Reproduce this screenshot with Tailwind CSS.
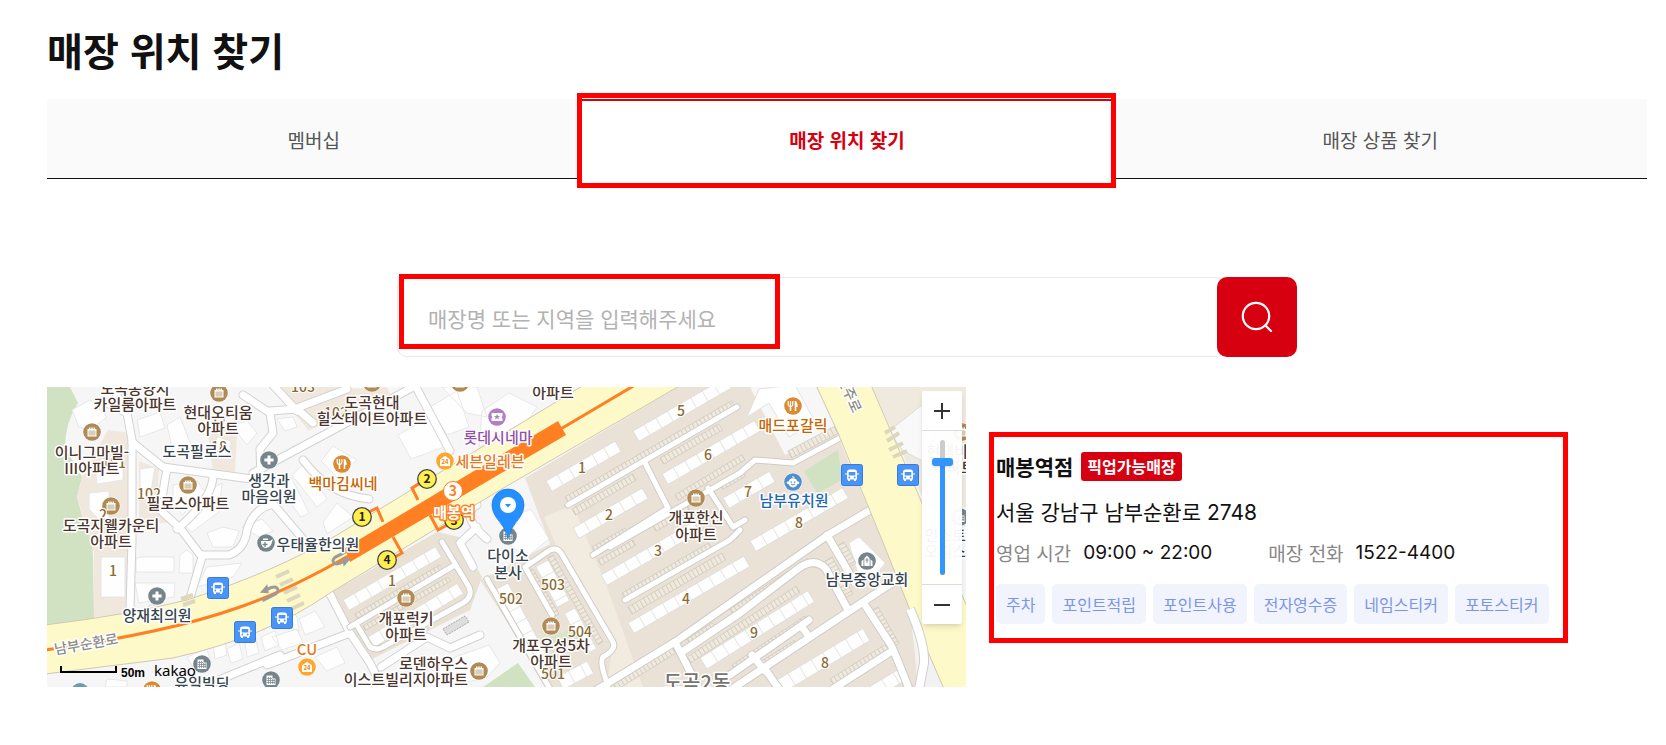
<!DOCTYPE html>
<html lang="ko">
<head>
  <meta charset="UTF-8">
  <meta name="viewport" content="width=device-width, initial-scale=1.0">
  <title>매장 위치 찾기</title>
  <script src="https://cdn.jsdelivr.net/npm/@tailwindcss/browser@4"></script>
</head>
<body class="bg-white text-[#111] font-['Noto_Sans_CJK_KR',sans-serif]">

  <main class="pl-[47px] pr-[19px] pt-[25px] pb-14">
    <h1 class="text-[39px] leading-12 font-bold mb-[26px]">매장 위치 찾기</h1>

    <!-- Tabs -->
    <nav class="grid grid-cols-3 h-20 text-[19px] text-[#555]">
      <a href="#membership" class="flex items-center justify-center pt-[3px] bg-[#fafafa] border-b border-[#111]">멤버십</a>
      <a href="#stores" class="relative flex items-center justify-center border-t-2 border-[#d70011] font-bold text-[#d70011]">
        매장 위치 찾기
        <span class="absolute -left-[3px] -right-[2px] -top-[8px] -bottom-[9px] border-5 border-[#ff0000]"></span>
      </a>
      <a href="#products" class="flex items-center justify-center pt-[3px] bg-[#fafafa] border-b border-[#111]">매장 상품 찾기</a>
    </nav>

    <!-- Search -->
    <form class="relative flex max-w-[900px] h-20 mx-auto mt-[98px]">
      <label for="keyword" class="sr-only">매장 검색</label>
      <input id="keyword" type="text" placeholder="매장명 또는 지역을 입력해주세요" class="grow min-w-0 h-20 pt-[2px] pl-[30px] -mr-2 border border-[#e9e9e9] rounded-[10px] text-[21px] placeholder:text-[#b2b2b2] outline-none">
      <button type="submit" aria-label="검색" class="relative flex items-center justify-center size-20 shrink-0 rounded-[10px] bg-[#d70011]">
        <svg class="size-9" viewBox="0 0 36 36" fill="none" stroke="#fff" stroke-width="2.2" stroke-linecap="round">
          <circle cx="17" cy="17" r="13.2" />
          <path d="M26.5 26.5L32 32" />
        </svg>
      </button>
      <span class="absolute left-[2px] -top-[3px] w-[381px] h-[75px] border-5 border-[#ff0000] pointer-events-none"></span>
    </form>

    <div class="grid grid-cols-[919fr_658fr] gap-[23px] items-center mt-[30px]">

      <!-- Map -->
      <section class="relative h-[300px] overflow-hidden bg-[#f7f7f8]">
        <svg class="block w-full h-full" viewBox="0 0 919 300" preserveAspectRatio="xMinYMin slice">
          <defs>
            <pattern id="bld" width="13.4" height="30" patternUnits="userSpaceOnUse">
              <rect width="13.4" height="30" fill="#fefefe" />
              <path d="M13 0V30" stroke="#dedbd7" stroke-width=".8" />
            </pattern>
            <pattern id="park" width="4.3" height="30" patternUnits="userSpaceOnUse">
              <rect width="4.3" height="30" fill="#f0e9dd" />
              <path d="M.5 0V30" stroke="#c9c3b9" stroke-width=".8" />
            </pattern>
            <g id="apt">
              <circle r="9.3" fill="#fff" /><circle r="8.8" fill="#b08b55" />
              <path d="M-4.5 -3H-3V-4.5H-1.5V-3H-.8V-4.5H.8V-3H1.5V-4.5H3V-3H4.5V4.5H-4.5Z" fill="#fff" />
              <path d="M-2 -2V4M0 -2V4M2 -2V4M-4 0H4M-4 2H4" stroke="#b08b55" stroke-width=".5" />
            </g>
            <g id="med">
              <circle r="9.3" fill="#fff" /><circle r="8.8" fill="#76858c" />
              <path d="M0 -4.6V4.6M-4.6 0H4.6" stroke="#fff" stroke-width="3" />
            </g>
            <g id="office">
              <circle r="9.3" fill="#fff" /><circle r="8.8" fill="#76858c" />
              <path d="M-4.5 5V-4.5H1.5V-1.5H4.5V5Z" fill="#fff" />
              <path d="M-2.5 -3V4M-.5 -3V4M1.6 -1V4M3.2 -1V4M-4 -1.5H1M-4 .5H4M-4 2.5H4" stroke="#76858c" stroke-width=".7" />
            </g>
            <g id="food">
              <circle r="9.3" fill="#fff" /><circle r="8.8" fill="#d98a33" />
              <path d="M-2.5 0V5M2.5 -5V5" stroke="#fff" stroke-width="1.6" />
              <path d="M-4.8 -5V-2Q-4.8 .5 -2.5 .5T-.2 -2V-5M-2.5 -5V0" stroke="#fff" stroke-width="1.2" fill="none" />
              <path d="M2.5 -5Q5 -3 4.6 1H2.5Z" fill="#fff" />
            </g>
            <g id="conv">
              <circle r="9.3" fill="#fff" /><circle r="8.8" fill="#ffa62f" />
              <path d="M-5 -1.5L0 -5.2L5 -1.5V5H-5Z" fill="#fff" />
              <text y="3.2" font-size="6" font-weight="700" text-anchor="middle" fill="#f08a00">24</text>
            </g>
            <g id="bus">
              <rect x="-10.5" y="-10.5" width="21" height="21" rx="2" fill="#4a94f7" stroke="#357bdc" />
              <path d="M-5 4.500V-3Q-5 -5.500 -2.500 -5.500H2.500Q5 -5.500 5 -3V4.500H4V6H2V4.500H-2V6H-4V4.500Z" fill="#fff" />
              <path d="M-3.300 -3H3.300V.5H-3.300Z" fill="#4a94f7" />
              <circle cx="-2.700" cy="2.500" r=".9" fill="#4a94f7" /><circle cx="2.700" cy="2.500" r=".9" fill="#4a94f7" />
              <path d="M-6 -2V0M6 -2V0" stroke="#fff" />
            </g>
            <g id="uturn" fill="none" stroke="#9b9b9b" stroke-width="3">
              <path d="M-9 6L5 0Q9 -3 6 -6Q3 -8 -3 -5" />
              <path d="M-3 -10L-2 -1L-11 -2Z" fill="#9b9b9b" stroke="none" />
            </g>

            <!-- street centre lines, drawn twice: casing and fill -->
            <g id="lanes">
              <path d="M63 -4L80 26L85 53V153L83 223" />
              <path d="M80 26L56 14M85 55L116 80L212 93M120 81L113 123L133 141L155 170L143 211M166 88Q166 112 130 142" />
              <path d="M155 168L182 168Q198 162 200 143Q206 122 226 117L256 152" />
              <path d="M206 86L370 -2M214 90L213 62L226 46L223 26L196 8M223 24L250 22L266 36M250 21L300 2M250 24L225 -3" />
              <path d="M370 2L403 64M256 73Q282 108 322 112" />
              <path d="M283 207L303 246L323 276L336 302M220 278L303 246M334 280L380 250L403 261L433 248M150 302L233 268M105 222L96 240" />
              <path d="M430 140L413 156L426 180M430 118Q412 128 440 152" />
            </g>
            <g id="lanes2">
              <path d="M311 240L323 260Q330 264 336 260L416 216Q426 210 422 200L395 155M303 240L408 178" />
              <path d="M521 118L690 20M598 76L621 121M563 160L693 86L708 73L746 76L793 51M546 168L621 121" />
              <path d="M578 213L683 153L693 143M661 101L686 140L698 133" />
              <path d="M478 180L503 163Q510 160 514 166L566 255Q570 262 556 270Q552 276 561 298M478 180L505 228M440 192L503 302" />
            </g>
            <g id="lanes3">
              <path d="M548 304L628 255L781 148L835 116" />
              <path d="M635 265L693 226L752 181Q768 170 779 182L801 223M628 255L652 302M780 148L808 196" />
              <path d="M683 288L762 233M755 240L762 250M705 268L718 284M685 302L816 215L866 182M718 282L732 302M816 215L844 258Q848 266 862 302M845 264L786 302" />
            </g>
          </defs>

          <!-- land use -->
          <rect width="919" height="300" fill="#f6f6f7" />
          <path d="M0 0H23L31 16Q18 36 18 60L35 90L30 110L38 140Q46 150 46 170L47 232L0 240Z" fill="#d0e2c1" />
          <path d="M35 90L61 43L85 46L83 226L47 230V165L30 110Z" fill="#f0e8dd" />
          <path d="M92 74L112 82L110 120L124 136L92 136Z" fill="#f0e8dd" />
          <path d="M160 40L190 42L188 90L166 86Z" fill="#f0e8dd" />
          <path d="M234 0H300V18L262 44L244 22ZM300 2L340 0L345 12L290 40L268 40Z" fill="#f0e8dd" />
          <path d="M283 206L390 145L412 150L435 190L423 223L323 273Z" fill="#e9e1d4" />
          <path d="M433 193L503 157L478 91L631 0H770L835 153L862 215L872 300H503Z" fill="#eae2d6" />
          <path d="M497 130L526 118L560 200L596 300H560L565 262L512 165Z" fill="#f2ebdf" />
          <path d="M825 0H919V120H880Z" fill="#f0e9de" />
          <path d="M703 0H769L791 46L738 68Z" fill="#f7f7f8" />
          <path d="M700 30L712 2L748 -2L768 35L742 50L722 16Z" fill="#fff" stroke="#e2e2e2" />
          <path d="M757 84L791 63L795 93L770 106Z" fill="#d0e2c1" />
          <path d="M436 300L471 276L488 300Z" fill="#d0e2c1" />
          <path d="M498 252L522 243L534 250L506 266Z" fill="#d8e5c8" />
          <path d="M842 44L880 14L888 80L856 64Z" fill="#f9f9f9" stroke="#ddd" />
          <path d="M866 226L898 300H870Z" fill="#f2f2f2" />

          <!-- buildings -->
          <g fill="#fefefe" stroke="#e2e2e4" stroke-width=".8">
            <path d="M25 23L43 13L60 30L43 43L32 40ZM48 78L76 70V93L50 97ZM93 82L108 80L103 110L93 113ZM90 33L113 25L118 41L93 50ZM120 38L133 30L144 58L126 64ZM42 106L62 104V144L42 122Z" />
            <path d="M54 170H78V210H54ZM89 171L95 170H127V185H89ZM133 168L140 163L146 168V186H132ZM88 196H128L127 210L92 216ZM160 180L195 176L186 190L150 200Z" />
            <path d="M126 98L150 94L158 105L135 128L126 116ZM160 105L175 96L172 125L145 145L137 138ZM170 50L184 54L182 72L166 70ZM184 38L200 34L210 46L200 58Z" />
            <path d="M351 48L390 26L403 58L364 72ZM274 74L286 59L310 73L290 90ZM245 88L258 76L280 112L270 120ZM276 135L290 116L306 130L280 147ZM228 96L244 90L262 126L254 130ZM230 32L246 30L250 40L238 44Z" />
            <path d="M383 20L410 4L422 40L400 48ZM395 0L430 0L440 30L420 26ZM435 24L462 6L490 20L482 32L432 60Z" />
            <path d="M225 250L250 242L256 256L235 263ZM232 236L238 218L250 230L252 244ZM252 232L268 224L278 240L258 248ZM268 270L290 260L298 276L280 284ZM180 262L192 256L196 272L184 276ZM198 256L208 250L212 266L200 270ZM214 250L228 244L232 258L218 264ZM60 292L80 294V300H58ZM166 258L178 254L180 268L168 272Z" />
            <path d="M380 280L442 258L453 276L440 290L410 298ZM140 270L160 262L164 276L146 280ZM195 140L215 132L226 144L212 150ZM160 146L176 140L192 144L186 160L166 160ZM470 128L484 122L502 152L480 170L462 158ZM802 156L812 150L838 176L832 184L812 190Z" />
          </g>
          <g fill="url(#park)" stroke="#cbc6bc" stroke-width=".6">
            <rect transform="translate(518 110) rotate(-30)" width="192" height="7" />
            <rect transform="translate(525 122) rotate(-30)" width="70" height="7" />
            <rect transform="translate(613 71) rotate(-30)" width="68" height="7" />
            <rect transform="translate(628 108) rotate(-31)" width="78" height="6" />
            <rect transform="translate(673 97) rotate(-30)" width="26" height="6" />
            <rect transform="translate(606 139) rotate(-30)" width="40" height="6" />
            <rect transform="translate(545 160) rotate(-30)" width="38" height="6" />
            <rect transform="translate(551 173) rotate(-30)" width="40" height="6" />
            <rect transform="translate(575 206) rotate(-30)" width="100" height="6" />
            <rect transform="translate(581 220) rotate(-30)" width="108" height="8" />
            <rect transform="translate(683 222) rotate(-33)" width="93" height="5" />
            <rect transform="translate(640 270) rotate(-33)" width="130" height="7" />
            <rect transform="translate(685 278) rotate(-34)" width="88" height="7" />
            <rect transform="translate(741 64) rotate(-28)" width="54" height="8" />
            <rect transform="translate(640 252) rotate(-33)" width="30" height="5" />
            <rect transform="translate(566 297) rotate(-32)" width="70" height="7" />
            <rect transform="translate(783 292) rotate(-32)" width="66" height="7" />
            <rect transform="translate(710 277) rotate(-32)" width="44" height="5" />
            <rect transform="translate(785 170) rotate(60)" width="42" height="8" />
            <rect transform="translate(797 155) rotate(60)" width="24" height="8" />
            <rect transform="translate(831 220) rotate(60)" width="42" height="8" />
            <rect transform="translate(506 168) rotate(60)" width="100" height="6" />
            <rect transform="translate(486 182) rotate(60)" width="52" height="6" />
            <rect transform="translate(456 215) rotate(60)" width="90" height="6" />
            <rect transform="translate(308 227) rotate(-30)" width="98" height="5" />
            <rect transform="translate(316 239) rotate(-30)" width="98" height="5" />
          </g>
          <g fill="url(#bld)" stroke="#dedbd7" stroke-width=".8">
            <rect transform="translate(499 94) rotate(-30)" width="80" height="12" />
            <rect transform="translate(586 44) rotate(-30)" width="110" height="12" />
            <rect transform="translate(526 141) rotate(-30)" width="80" height="12" />
            <rect transform="translate(615 87) rotate(-30)" width="107" height="12" />
            <rect transform="translate(676 111) rotate(-30)" width="54" height="12" />
            <rect transform="translate(703 154) rotate(-30)" width="107" height="12" />
            <rect transform="translate(554 188) rotate(-30)" width="107" height="12" />
            <rect transform="translate(581 236) rotate(-30)" width="134" height="12" />
            <rect transform="translate(653 271) rotate(-32)" width="127" height="13" />
            <rect transform="translate(730 293) rotate(-31)" width="100" height="14" />
            <rect transform="translate(812 306) rotate(-31)" width="48" height="13" />
            <rect transform="translate(296 213) rotate(-30)" width="107" height="12" />
            <rect transform="translate(321 250) rotate(-31)" width="104" height="12" />
            <rect transform="translate(501 173) rotate(62)" width="46" height="14" />
            <rect transform="translate(528 221) rotate(62)" width="46" height="12" />
            <rect transform="translate(461 196) rotate(62)" width="80" height="14" />
            <rect transform="translate(510 290) rotate(-28)" width="34" height="14" />
          </g>

          <!-- streets -->
          <g fill="none" stroke-linejoin="round" stroke-linecap="round">
            <use href="#lanes" stroke="#d2d2d4" stroke-width="9" />
            <use href="#lanes" stroke="#fff" stroke-width="7" />
            <use href="#lanes2" stroke="#cfccc8" stroke-width="7" />
            <use href="#lanes3" stroke="#cfccc8" stroke-width="9" />
            <use href="#lanes2" stroke="#fff" stroke-width="5" />
            <use href="#lanes3" stroke="#fff" stroke-width="7" />
          </g>

          <!-- main roads -->
          <g fill="#fdf9c8" stroke="#cfc9b0" stroke-width="1">
            <path d="M-2 238Q80 228 140 213Q230 184 290 148L537 -2H634L453 103L283 206Q220 250 126 271L-2 287Z" />
            <path d="M769 -2H824L865 93L921 222V302H897L865 228L835 153L791 46Z" />
          </g>
          <path d="M863 222Q878 256 877 276L872 302" fill="none" stroke="#d0d0d0" stroke-width="10" />
          <path d="M863 222Q878 256 877 276L872 302" fill="none" stroke="#fff" stroke-width="8" />
          <g stroke="#ddd7bd" stroke-width="4">
            <path d="M229 190L242 184M233 198L246 192M237 206L250 200M240 214L253 208M244 222L257 216M838 46L848 40M840 54L852 46M842 63L856 56M846 70L860 64M134 212L146 208M136 218L148 214" />
          </g>
          <path d="M396 242L418 229L422 235L400 248Z" fill="#dedede" stroke="#aaa" stroke-dasharray="2 1" />

          <!-- subway line -->
          <path d="M-2 263Q120 246 193 220Q240 204 303 168M512 43L588 -2" fill="none" stroke="#ff7f23" stroke-width="3" />
          <path d="M298 161L511 34L519 48L303 175Z" fill="#ff7f23" />
          <path d="M371 113L365 101L376 94M336 135L330 121L320 126M383 128L391 143L402 137M346 150L355 166L346 171" fill="none" stroke="#ff7f23" stroke-width="3" />
          <use href="#uturn" transform="translate(224 207) rotate(-4)" />
          <use href="#uturn" transform="translate(293 170) rotate(176)" />

          <!-- markers -->
          <use href="#apt" x="45" y="45" /><use href="#apt" x="172" y="6" /><use href="#apt" x="141" y="98" />
          <use href="#apt" x="64" y="119" /><use href="#apt" x="325" y="-4" /><use href="#apt" x="413" y="-4" />
          <use href="#apt" x="359" y="211" /><use href="#apt" x="432" y="284" /><use href="#apt" x="504" y="239" />
          <use href="#apt" x="649" y="111" /><use href="#apt" x="915" y="45" />
          <use href="#med" x="222" y="73" /><use href="#med" x="110" y="209" />
          <use href="#office" x="155" y="277" /><use href="#office" x="224" y="293" /><use href="#office" x="461" y="149" /><use href="#office" x="913" y="130" />
          <use href="#food" x="295" y="77" /><use href="#food" x="746" y="19" /><use href="#food" x="105" y="303" />
          <use href="#conv" x="398" y="74" /><use href="#conv" x="260" y="280" />
          <use href="#bus" x="171" y="201" /><use href="#bus" x="198" y="245" /><use href="#bus" x="235" y="231" />
          <use href="#bus" x="805" y="88" /><use href="#bus" x="861" y="88" />
          <circle cx="33" cy="305" r="9" fill="#6f9ab5" />
          <g transform="translate(219 156)">
            <circle r="9.300" fill="#fff" /><circle r="8.800" fill="#76858c" />
            <path d="M-5 -2H4L7 -4L5 2Q3 5 -1 5Q-5 4 -5 -2ZM-3 -4.500H2V-3H-3Z" fill="#fff" />
            <path d="M-1 -1V4M-3.500 1.500H1.500" stroke="#76858c" stroke-width="1.300" />
          </g>
          <g transform="translate(450 30)">
            <circle r="9.300" fill="#fff" /><circle r="8.800" fill="#b07fc4" />
            <path d="M-5.500 -4H5.500V-1.500Q4 0 5.500 1.500V4H-5.500V1.500Q-4 0 -5.500 -1.500Z" fill="#fff" />
            <path d="M0 -3L.9 -1H3L1.300 .4L2 2.500L0 1.200L-2 2.500L-1.300 .4L-3 -1H-.9Z" fill="#b07fc4" />
          </g>
          <g transform="translate(746 95)">
            <circle r="9.300" fill="#fff" /><circle r="8.800" fill="#4f8fcd" />
            <circle cy=".8" r="4.600" fill="#fff" /><circle cx="-5" cy=".8" r="1.300" fill="#fff" /><circle cx="5" cy=".8" r="1.300" fill="#fff" />
            <path d="M-1 -5Q1 -6 1 -4" stroke="#fff" fill="none" />
            <circle cx="-1.800" cy="0" r=".8" fill="#4f8fcd" /><circle cx="1.800" cy="0" r=".8" fill="#4f8fcd" />
            <path d="M-2 2Q0 4.200 2 2" stroke="#4f8fcd" fill="none" />
          </g>
          <g transform="translate(820 174)">
            <circle r="9.300" fill="#fff" /><circle r="8.800" fill="#76858c" />
            <path d="M-5.500 5V0L-3.500 -1.500V5ZM5.500 5V0L3.500 -1.500V5ZM-2.700 5V-2.500L0 -5.500L2.700 -2.500V5Z" fill="#fff" />
            <path d="M0 -3V2M-1.500 -1H1.500" stroke="#76858c" stroke-width=".9" />
          </g>

          <!-- labels -->
          <g class="font-medium" transform="translate(0 1)" font-size="15" text-anchor="middle" stroke="#fff" stroke-width="3" stroke-linejoin="round" paint-order="stroke">
            <g fill="#8a6c35" stroke-width="2" font-size="14">
              <text x="67" y="80">101</text><text x="102" y="111">102</text><text x="256" y="4">103</text><text x="172" y="39">17</text>
              <text x="172" y="64">18</text><text x="56" y="132">2</text><text x="289" y="30">102</text><text x="66" y="188">1</text>
              <text x="535" y="85">1</text><text x="562" y="132">2</text><text x="611" y="168">3</text><text x="639" y="216">4</text>
              <text x="634" y="28">5</text><text x="661" y="72">6</text><text x="701" y="109">7</text><text x="752" y="140">8</text>
              <text x="707" y="250">9</text><text x="778" y="280">8</text><text x="345" y="198">1</text>
              <text x="506" y="291">501</text><text x="464" y="216">502</text><text x="506" y="202">503</text><text x="533" y="249">504</text>
            </g>
            <g fill="#4b352c">
              <text x="88" y="6">도곡동양지</text><text x="88" y="22">카일룸아파트</text>
              <text x="171" y="30">현대오티움</text><text x="171" y="46">아파트</text>
              <text x="45" y="70">이니그마빌-</text><text x="45" y="86">III아파트</text>
              <text x="141" y="121">필로스아파트</text>
              <text x="64" y="143">도곡지웰카운티</text><text x="64" y="159">아파트</text>
              <text x="325" y="20">도곡현대</text><text x="325" y="36">힐스테이트아파트</text>
              <text x="506" y="10">아파트</text>
              <text x="359" y="236">개포럭키</text><text x="359" y="252">아파트</text>
              <text x="421" y="281" text-anchor="end">로덴하우스</text><text x="421" y="297" text-anchor="end">이스트빌리지아파트</text>
              <text x="504" y="263">개포우성5차</text><text x="504" y="279">아파트</text>
              <text x="649" y="135">개포한신</text><text x="649" y="152">아파트</text>
              <text x="907" y="69">현대비전</text><text x="907" y="85">아파트</text>
            </g>
            <g fill="#35444f">
              <text x="150" y="69">도곡필로스</text>
              <text x="222" y="98">생각과</text><text x="222" y="114">마음의원</text>
              <text x="271" y="162">우태율한의원</text>
              <text x="110" y="233">양재최의원</text>
              <text x="155" y="301">유일빌딩</text>
              <text x="461" y="173">다이소</text><text x="461" y="190">본사</text>
              <text x="820" y="197">남부중앙교회</text>
              <text x="905" y="153">인스토리</text><text x="905" y="169">오피스텔</text>
            </g>
            <text x="296" y="101" fill="#c66500">백마김씨네</text>
            <text x="746" y="43" fill="#c66500">매드포갈릭</text>
            <text x="451" y="55" fill="#9450a8">롯데시네마</text>
            <text x="443" y="79" fill="#e57a1c">세븐일레븐</text>
            <text x="260" y="267" fill="#e57a1c">CU</text>
            <text x="747" y="118" fill="#1b67b3">남부유치원</text>
            <text transform="translate(40 261) rotate(-10)" fill="#8c8c84" font-size="14">남부순환로</text>
            <text transform="translate(798 8) rotate(66)" fill="#8c8c84" font-size="14">언주로</text>
            <text x="650" y="302" fill="#77736e" font-size="20">도곡2동</text>
          </g>

          <!-- station and exits -->
          <g font-size="12" font-weight="700" text-anchor="middle" fill="#222">
            <g fill="#fff04f" stroke="#444" stroke-width="1.300">
              <circle cx="315" cy="130" r="9.300" /><circle cx="380" cy="92" r="9.300" /><circle cx="407" cy="133" r="9.300" /><circle cx="340" cy="173" r="9.300" />
            </g>
            <text x="315" y="134">1</text><text x="380" y="96">2</text><text x="407" y="138">3</text><text x="340" y="177">4</text>
            <circle cx="406" cy="104" r="9.500" fill="#fff" stroke="#ff7f23" />
            <text x="406" y="109" font-size="14" fill="#ff7f23">3</text>
            <text x="407" y="131" font-size="15" fill="#fff" stroke="#ff7f23" stroke-width="3" stroke-linejoin="round" paint-order="stroke">매봉역</text>
          </g>

          <!-- store pin -->
          <path d="M461 151Q458 140 449 130Q445 124 445 118A16 16 0 0 1 477 118Q477 124 473 130Q464 140 461 151Z" fill="#258fff" stroke="#1478e0" stroke-width=".8" />
          <circle cx="461" cy="118" r="8" fill="#fff" />
          <path d="M458 117H464L461 120.500Z" fill="#258fff" />

          <!-- scale -->
          <path d="M14 279V285H69V279" fill="none" stroke="#000" stroke-width="2" />
          <text x="74" y="290" font-size="12" font-weight="700" class="font-['Liberation_Sans',sans-serif]">50m</text>
          <text x="107" y="289" font-size="15" class="font-['Noto_Sans',sans-serif]">kakao</text>
        </svg>

        <!-- Zoom control -->
        <div class="absolute top-1 right-1 w-10 rounded-[3px] bg-white/95 shadow-md flex flex-col items-center">
          <button type="button" aria-label="확대" class="flex items-center justify-center w-10 h-10 border-b border-[#ddd] bg-white rounded-t-[3px]">
            <svg class="size-4" viewBox="0 0 16 16" stroke="#333" stroke-width="2"><path d="M8 0V16M0 8H16" /></svg>
          </button>
          <div class="flex py-[9px]">
            <label for="zoom" class="sr-only">지도 확대 수준</label>
            <input id="zoom" type="range" min="0" max="100" value="14" class="appearance-none bg-transparent [writing-mode:vertical-lr] w-[21px] h-[135px] [&::-webkit-slider-runnable-track]:w-[5px] [&::-webkit-slider-runnable-track]:rounded-full [&::-webkit-slider-runnable-track]:bg-[linear-gradient(to_bottom,#ccc_0_14%,#3396ff_14%)] [&::-webkit-slider-thumb]:appearance-none [&::-webkit-slider-thumb]:w-[21px] [&::-webkit-slider-thumb]:h-2 [&::-webkit-slider-thumb]:-ml-2 [&::-webkit-slider-thumb]:rounded-[3px] [&::-webkit-slider-thumb]:bg-[#3396ff] [&::-webkit-slider-thumb]:shadow">
          </div>
          <button type="button" aria-label="축소" class="flex items-center justify-center w-10 h-10 border-t border-[#ddd] bg-white rounded-b-[3px]">
            <svg class="size-4" viewBox="0 0 16 16" stroke="#333" stroke-width="2"><path d="M0 8H16" /></svg>
          </button>
        </div>
      </section>

      <!-- Store info -->
      <section class="w-fit border-5 border-[#ff0000] pt-[15px] pb-[14px] pl-[2px] pr-[14px]">
        <div class="flex items-center gap-2">
          <h2 class="text-[21px] leading-7 font-bold">매봉역점</h2>
          <span class="h-[29px] px-[6px] rounded-[3px] bg-[#d70011] text-white text-[16px] leading-[29px] font-bold">픽업가능매장</span>
        </div>
        <p class="mt-[18px] text-[21px] leading-7 font-['Inter','Noto_Sans_CJK_KR',sans-serif]">서울 강남구 남부순환로 2748</p>
        <dl class="flex mt-[14px] text-[19px] leading-6">
          <dt class="text-[#888]">영업 시간</dt>
          <dd class="ml-3 font-['Inter',sans-serif]">09:00 ~ 22:00</dd>
          <dt class="ml-14 text-[#888]">매장 전화</dt>
          <dd class="ml-3 font-['Inter',sans-serif]">1522-4400</dd>
        </dl>
        <ul class="flex flex-wrap gap-[7px] mt-[19px] text-[16px] leading-10 text-[#7c95e8]">
          <li class="px-[10px] rounded-[5px] bg-[#f1f3fd]">주차</li>
          <li class="px-[10px] rounded-[5px] bg-[#f1f3fd]">포인트적립</li>
          <li class="px-[10px] rounded-[5px] bg-[#f1f3fd]">포인트사용</li>
          <li class="px-[10px] rounded-[5px] bg-[#f1f3fd]">전자영수증</li>
          <li class="px-[10px] rounded-[5px] bg-[#f1f3fd]">네임스티커</li>
          <li class="px-[10px] rounded-[5px] bg-[#f1f3fd]">포토스티커</li>
        </ul>
      </section>
    </div>
  </main>

</body>
</html>
